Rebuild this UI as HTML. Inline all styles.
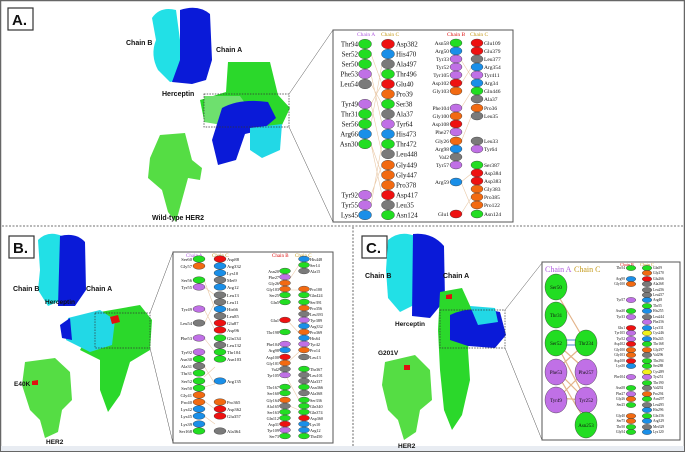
<!DOCTYPE html>
<html><head><meta charset="utf-8"><style>
html,body{margin:0;padding:0;background:#fff}
svg{display:block}
text{font-family:"Liberation Serif",serif;fill:#111}
.s{font-family:"Liberation Sans",sans-serif;font-weight:bold}
ellipse{stroke:#333;stroke-width:.4}
.g{fill:#22dd22}.r{fill:#ee1111}.b{fill:#1a8fe8}.k{fill:#7a7a7a}.p{fill:#c070e6}.o{fill:#f26a12}.y{fill:#f2f21a}
.ln{stroke:#e9c9a8;stroke-width:.6;fill:none}
</style></head><body>
<svg width="685" height="452" viewBox="0 0 685 452" xmlns="http://www.w3.org/2000/svg">
<rect x="0.5" y="0.5" width="684" height="451" fill="#fff" stroke="#666" stroke-width="1.5"/>
<line x1="2" y1="226" x2="683" y2="226" stroke="#444" stroke-dasharray="2,1.5" stroke-width=".8"/>
<line x1="353" y1="227" x2="353" y2="450" stroke="#444" stroke-dasharray="2,1.5" stroke-width=".8"/>
<rect x="1" y="446" width="683" height="5" fill="#e8ecf2"/>

<rect x="8" y="8" width="25" height="22" fill="#fff" stroke="#333" stroke-width="1.2"/>
<text x="12" y="25" class="s" font-size="15">A.</text>
<rect x="9" y="236" width="25" height="22" fill="#fff" stroke="#333" stroke-width="1.2"/>
<text x="13" y="253" class="s" font-size="15">B.</text>
<rect x="362" y="236" width="25" height="22" fill="#fff" stroke="#333" stroke-width="1.2"/>
<text x="366" y="253" class="s" font-size="15">C.</text>

<!-- Panel A proteins -->
<path d="M152 18 Q160 6 176 10 L180 40 L182 80 L170 82 L158 70 Q150 55 156 40 Z" fill="#22e0e6"/>
<path d="M180 10 Q198 4 210 14 L212 60 L206 80 L192 84 L172 82 L180 60 Z" fill="#0a1ad8"/>
<text x="126" y="45" class="s" font-size="7">Chain B</text>
<text x="216" y="52" class="s" font-size="7">Chain A</text>
<text x="162" y="96" class="s" font-size="7">Herceptin</text>
<path d="M228 62 L270 62 L278 95 L290 108 L282 125 L240 128 L204 120 L200 100 L226 92 Z" fill="#2bd82b"/>
<path d="M204 96 L240 96 L250 110 L240 128 L204 122 Z" fill="#6ee06e"/>
<path d="M222 108 Q240 98 268 102 L276 118 L262 130 L245 134 L236 160 L218 165 L212 140 Z" fill="#0a1ad8"/>
<path d="M250 128 L282 124 L280 150 L262 158 L250 150 Z" fill="#22d8e6"/>
<rect x="204" y="94" width="85" height="33" fill="none" stroke="#333" stroke-dasharray="1.5,1.2" stroke-width=".7"/>
<line x1="289" y1="94" x2="333" y2="30" stroke="#555" stroke-width=".5"/>
<line x1="289" y1="127" x2="333" y2="222" stroke="#555" stroke-width=".5"/>
<path d="M160 135 L185 133 L192 160 L202 168 L200 180 L188 178 L182 200 L176 222 L168 212 L162 190 L148 178 L150 158 Z" fill="#55dd44"/>
<text x="152" y="220" class="s" font-size="7">Wild-type HER2</text>

<!-- Inset A -->
<rect x="333" y="30" width="180" height="192" fill="#fff" stroke="#555" stroke-width="1"/>
<g class="ln">
<path d="M371 84 L382 104 M371 104 L382 84 M371 74 L382 124 M371 144 L382 175 M371 144 L382 195 M371 104 L382 154 M371 124 L382 64 M371 195 L382 165 M371 205 L382 144 M371 54 L382 84"/>
<path d="M461 60 L471 76 M461 84 L471 68 M461 108 L471 92 M461 142 L471 117 M461 182 L471 206 M461 182 L471 174 M461 214 L471 198"/>
</g>
<g font-size="5.5"><text x="357" y="36" style="fill:#b05ce0">Chain A</text><text x="381" y="36" style="fill:#c49a1a">Chain C</text>
<text x="447" y="36" style="fill:#dd1111">Chain B</text><text x="470" y="36" style="fill:#c49a1a">Chain C</text></g>
<g font-size="7" text-anchor="end">
<text x="358" y="46.5">Thr94</text><text x="358" y="56.5">Ser52</text><text x="358" y="66.5">Ser50</text><text x="358" y="76.5">Phe53</text><text x="358" y="86.5">Leu54</text><text x="358" y="106.5">Tyr49</text><text x="358" y="116.5">Thr31</text><text x="358" y="126.5">Ser56</text><text x="358" y="136.5">Arg66</text><text x="358" y="146.5">Asn30</text><text x="358" y="197.5">Tyr92</text><text x="358" y="207.5">Tyr55</text><text x="358" y="217.5">Lys45</text>
</g>
<g>
<ellipse cx="365" cy="44" rx="6.5" ry="4.8" class="g"/><ellipse cx="365" cy="54" rx="6.5" ry="4.8" class="g"/><ellipse cx="365" cy="64" rx="6.5" ry="4.8" class="g"/><ellipse cx="365" cy="74" rx="6.5" ry="4.8" class="p"/><ellipse cx="365" cy="84" rx="6.5" ry="4.8" class="k"/><ellipse cx="365" cy="104" rx="6.5" ry="4.8" class="p"/><ellipse cx="365" cy="114" rx="6.5" ry="4.8" class="g"/><ellipse cx="365" cy="124" rx="6.5" ry="4.8" class="g"/><ellipse cx="365" cy="134" rx="6.5" ry="4.8" class="b"/><ellipse cx="365" cy="144" rx="6.5" ry="4.8" class="g"/><ellipse cx="365" cy="195" rx="6.5" ry="4.8" class="p"/><ellipse cx="365" cy="205" rx="6.5" ry="4.8" class="p"/><ellipse cx="365" cy="215" rx="6.5" ry="4.8" class="b"/>
<ellipse cx="388" cy="44" rx="6.5" ry="4.8" class="r"/><ellipse cx="388" cy="54" rx="6.5" ry="4.8" class="b"/><ellipse cx="388" cy="64" rx="6.5" ry="4.8" class="k"/><ellipse cx="388" cy="74" rx="6.5" ry="4.8" class="g"/><ellipse cx="388" cy="84" rx="6.5" ry="4.8" class="r"/><ellipse cx="388" cy="94" rx="6.5" ry="4.8" class="o"/><ellipse cx="388" cy="104" rx="6.5" ry="4.8" class="g"/><ellipse cx="388" cy="114" rx="6.5" ry="4.8" class="k"/><ellipse cx="388" cy="124" rx="6.5" ry="4.8" class="p"/><ellipse cx="388" cy="134" rx="6.5" ry="4.8" class="b"/><ellipse cx="388" cy="144" rx="6.5" ry="4.8" class="g"/><ellipse cx="388" cy="154" rx="6.5" ry="4.8" class="k"/><ellipse cx="388" cy="165" rx="6.5" ry="4.8" class="o"/><ellipse cx="388" cy="175" rx="6.5" ry="4.8" class="o"/><ellipse cx="388" cy="185" rx="6.5" ry="4.8" class="o"/><ellipse cx="388" cy="195" rx="6.5" ry="4.8" class="r"/><ellipse cx="388" cy="205" rx="6.5" ry="4.8" class="k"/><ellipse cx="388" cy="215" rx="6.5" ry="4.8" class="g"/>
</g>
<g font-size="7">
<text x="396" y="46.5">Asp382</text><text x="396" y="56.5">His470</text><text x="396" y="66.5">Ala497</text><text x="396" y="76.5">Thr496</text><text x="396" y="86.5">Glu40</text><text x="396" y="96.5">Pro39</text><text x="396" y="106.5">Ser38</text><text x="396" y="116.5">Ala37</text><text x="396" y="126.5">Tyr64</text><text x="396" y="136.5">His473</text><text x="396" y="146.5">Thr472</text><text x="396" y="156.5">Leu448</text><text x="396" y="167.5">Gly449</text><text x="396" y="177.5">Gly447</text><text x="396" y="187.5">Pro378</text><text x="396" y="197.5">Asp417</text><text x="396" y="207.5">Leu35</text><text x="396" y="217.5">Asn124</text>
</g>
<g font-size="5.5" text-anchor="end">
<text x="449" y="45">Asn58</text><text x="449" y="53">Arg50</text><text x="449" y="61">Tyr33</text><text x="449" y="69">Tyr52</text><text x="449" y="77">Tyr105</text><text x="449" y="85">Asp102</text><text x="449" y="93">Gly103</text><text x="449" y="110">Phe104</text><text x="449" y="118">Gly100</text><text x="449" y="126">Asp108</text><text x="449" y="134">Phe27</text><text x="449" y="143">Gly26</text><text x="449" y="151">Arg98</text><text x="449" y="159">Val2</text><text x="449" y="167">Tyr57</text><text x="449" y="184">Arg59</text><text x="449" y="216">Glu1</text>
</g>
<g>
<ellipse cx="456" cy="43" rx="6" ry="4" class="g"/><ellipse cx="456" cy="51" rx="6" ry="4" class="b"/><ellipse cx="456" cy="59" rx="6" ry="4" class="p"/><ellipse cx="456" cy="67" rx="6" ry="4" class="p"/><ellipse cx="456" cy="75" rx="6" ry="4" class="p"/><ellipse cx="456" cy="83" rx="6" ry="4" class="r"/><ellipse cx="456" cy="91" rx="6" ry="4" class="o"/><ellipse cx="456" cy="108" rx="6" ry="4" class="p"/><ellipse cx="456" cy="116" rx="6" ry="4" class="o"/><ellipse cx="456" cy="124" rx="6" ry="4" class="r"/><ellipse cx="456" cy="132" rx="6" ry="4" class="p"/><ellipse cx="456" cy="141" rx="6" ry="4" class="o"/><ellipse cx="456" cy="149" rx="6" ry="4" class="b"/><ellipse cx="456" cy="157" rx="6" ry="4" class="k"/><ellipse cx="456" cy="165" rx="6" ry="4" class="p"/><ellipse cx="456" cy="182" rx="6" ry="4" class="b"/><ellipse cx="456" cy="214" rx="6" ry="4" class="r"/>
<ellipse cx="477" cy="43" rx="6" ry="4" class="r"/><ellipse cx="477" cy="51" rx="6" ry="4" class="r"/><ellipse cx="477" cy="59" rx="6" ry="4" class="k"/><ellipse cx="477" cy="67" rx="6" ry="4" class="b"/><ellipse cx="477" cy="75" rx="6" ry="4" class="p"/><ellipse cx="477" cy="83" rx="6" ry="4" class="b"/><ellipse cx="477" cy="91" rx="6" ry="4" class="g"/><ellipse cx="477" cy="99" rx="6" ry="4" class="k"/><ellipse cx="477" cy="108" rx="6" ry="4" class="o"/><ellipse cx="477" cy="116" rx="6" ry="4" class="k"/><ellipse cx="477" cy="141" rx="6" ry="4" class="k"/><ellipse cx="477" cy="149" rx="6" ry="4" class="p"/><ellipse cx="477" cy="165" rx="6" ry="4" class="g"/><ellipse cx="477" cy="173" rx="6" ry="4" class="r"/><ellipse cx="477" cy="181" rx="6" ry="4" class="r"/><ellipse cx="477" cy="189" rx="6" ry="4" class="o"/><ellipse cx="477" cy="197" rx="6" ry="4" class="o"/><ellipse cx="477" cy="205" rx="6" ry="4" class="o"/><ellipse cx="477" cy="214" rx="6" ry="4" class="g"/>
</g>
<g font-size="5.5">
<text x="484" y="45">Glu109</text><text x="484" y="53">Glu379</text><text x="484" y="61">Leu377</text><text x="484" y="69">Arg354</text><text x="484" y="77">Tyr411</text><text x="484" y="85">Arg34</text><text x="484" y="93">Gln446</text><text x="484" y="101">Ala37</text><text x="484" y="110">Pro36</text><text x="484" y="118">Leu35</text><text x="484" y="143">Leu33</text><text x="484" y="151">Tyr64</text><text x="484" y="167">Ser387</text><text x="484" y="175">Asp384</text><text x="484" y="183">Asp383</text><text x="484" y="191">Gly383</text><text x="484" y="199">Pro385</text><text x="484" y="207">Pro122</text><text x="484" y="216">Asn124</text>
</g>

<!-- Panel B proteins -->
<path d="M38 240 Q48 230 62 236 L62 300 L48 306 L38 290 L40 270 Z" fill="#22e0e6"/>
<path d="M60 236 Q76 232 85 242 L86 290 L75 306 L58 306 Z" fill="#0a1ad8"/>
<text x="13" y="291" class="s" font-size="7">Chain B</text>
<text x="86" y="291" class="s" font-size="7">Chain A</text>
<text x="45" y="304" class="s" font-size="6.5">Herceptin</text>
<path d="M100 312 L140 305 L152 320 L150 350 L130 362 L120 395 L108 412 L100 390 L100 360 L80 350 Z" fill="#2bd82b"/>
<path d="M68 318 L100 310 L115 320 L112 345 L90 352 L66 340 Z" fill="#22d8e6"/>
<path d="M60 325 L70 318 L72 340 L62 338 Z" fill="#0a1ad8"/>
<path d="M110 317 L118 315 L120 322 L112 324 Z" fill="#e01010"/>
<rect x="95" y="313" width="55" height="35" fill="none" stroke="#333" stroke-dasharray="1.5,1.2" stroke-width=".7"/>
<line x1="150" y1="313" x2="173" y2="252" stroke="#555" stroke-width=".5"/>
<line x1="150" y1="348" x2="173" y2="443" stroke="#555" stroke-width=".5"/>
<path d="M25 362 L55 358 L70 372 L72 400 L62 410 L58 432 L45 438 L40 420 L30 410 L22 385 Z" fill="#55dd44"/>
<path d="M32 381 L38 380 L38 385 L32 385 Z" fill="#e01010"/>
<text x="14" y="386" class="s" font-size="6.5">E40K</text>
<text x="46" y="444" class="s" font-size="6.5">HER2</text>

<!-- Inset B -->
<rect x="173" y="252" width="160" height="191" fill="#fff" stroke="#555" stroke-width="1"/>
<g class="ln"><path d="M204 280 L215 309 M204 287 L215 295 M204 309 L215 330 M204 324 L215 302 M204 338 L215 352 M204 377 L215 367 M204 387 L215 384 M204 401 L215 409 M204 416 L215 424 M204 366 L215 384 M287 283 L299 265 M287 290 L299 290 M287 320 L299 333 M287 363 L299 352 M287 378 L299 400 M287 405 L299 410"/></g>
<g font-size="5"><text x="186" y="257" style="fill:#b05ce0">Chain A</text><text x="212" y="257" style="fill:#c49a1a">Chain C</text><text x="272" y="257" style="fill:#dd1111">Chain B</text><text x="295" y="257" style="fill:#c49a1a">Chain C</text></g>
<g font-size="4.6" text-anchor="end">
<text x="192" y="261">Ser60</text><text x="192" y="268">Gly57</text><text x="192" y="282">Ser56</text><text x="192" y="289">Tyr55</text><text x="192" y="311">Tyr49</text><text x="192" y="325">Leu54</text><text x="192" y="340">Phe53</text><text x="192" y="354">Tyr92</text><text x="192" y="361">Asn30</text><text x="192" y="368">Ala31</text><text x="192" y="375">Thr31</text><text x="192" y="383">Ser52</text><text x="192" y="390">Ser50</text><text x="192" y="397">Gly41</text><text x="192" y="404">Pro40</text><text x="192" y="411">Lys42</text><text x="192" y="418">Lys45</text><text x="192" y="426">Lys39</text><text x="192" y="433">Ser168</text>
</g>
<g>
<ellipse cx="199" cy="259" rx="6" ry="3.3" class="g"/><ellipse cx="199" cy="266" rx="6" ry="3.3" class="o"/><ellipse cx="199" cy="280" rx="6" ry="3.3" class="g"/><ellipse cx="199" cy="287" rx="6" ry="3.3" class="p"/><ellipse cx="199" cy="309" rx="6" ry="3.3" class="p"/><ellipse cx="199" cy="323" rx="6" ry="3.3" class="k"/><ellipse cx="199" cy="338" rx="6" ry="3.3" class="p"/><ellipse cx="199" cy="352" rx="6" ry="3.3" class="p"/><ellipse cx="199" cy="359" rx="6" ry="3.3" class="g"/><ellipse cx="199" cy="366" rx="6" ry="3.3" class="k"/><ellipse cx="199" cy="373" rx="6" ry="3.3" class="g"/><ellipse cx="199" cy="381" rx="6" ry="3.3" class="g"/><ellipse cx="199" cy="388" rx="6" ry="3.3" class="g"/><ellipse cx="199" cy="395" rx="6" ry="3.3" class="o"/><ellipse cx="199" cy="402" rx="6" ry="3.3" class="o"/><ellipse cx="199" cy="409" rx="6" ry="3.3" class="b"/><ellipse cx="199" cy="416" rx="6" ry="3.3" class="b"/><ellipse cx="199" cy="424" rx="6" ry="3.3" class="b"/><ellipse cx="199" cy="431" rx="6" ry="3.3" class="g"/>
<ellipse cx="220" cy="259" rx="6" ry="3.3" class="r"/><ellipse cx="220" cy="266" rx="6" ry="3.3" class="b"/><ellipse cx="220" cy="273" rx="6" ry="3.3" class="b"/><ellipse cx="220" cy="280" rx="6" ry="3.3" class="k"/><ellipse cx="220" cy="287" rx="6" ry="3.3" class="b"/><ellipse cx="220" cy="295" rx="6" ry="3.3" class="k"/><ellipse cx="220" cy="302" rx="6" ry="3.3" class="k"/><ellipse cx="220" cy="309" rx="6" ry="3.3" class="b"/><ellipse cx="220" cy="316" rx="6" ry="3.3" class="k"/><ellipse cx="220" cy="323" rx="6" ry="3.3" class="r"/><ellipse cx="220" cy="330" rx="6" ry="3.3" class="r"/><ellipse cx="220" cy="338" rx="6" ry="3.3" class="g"/><ellipse cx="220" cy="345" rx="6" ry="3.3" class="k"/><ellipse cx="220" cy="352" rx="6" ry="3.3" class="g"/><ellipse cx="220" cy="359" rx="6" ry="3.3" class="g"/><ellipse cx="220" cy="381" rx="6" ry="3.3" class="b"/><ellipse cx="220" cy="402" rx="6" ry="3.3" class="o"/><ellipse cx="220" cy="409" rx="6" ry="3.3" class="r"/><ellipse cx="220" cy="416" rx="6" ry="3.3" class="r"/><ellipse cx="220" cy="431" rx="6" ry="3.3" class="k"/>
</g>
<g font-size="4.6">
<text x="227" y="261">Asp88</text><text x="227" y="268">Arg332</text><text x="227" y="275">Lys10</text><text x="227" y="282">Met9</text><text x="227" y="289">Arg12</text><text x="227" y="297">Leu13</text><text x="227" y="304">Leu11</text><text x="227" y="311">His66</text><text x="227" y="318">Leu85</text><text x="227" y="325">Glu87</text><text x="227" y="332">Asp96</text><text x="227" y="340">Gln134</text><text x="227" y="347">Leu132</text><text x="227" y="354">Thr104</text><text x="227" y="361">Asn103</text><text x="227" y="383">Arg135</text><text x="227" y="404">Pro365</text><text x="227" y="411">Asp362</text><text x="227" y="418">Glu357</text><text x="227" y="433">Ala364</text>
</g>
<g font-size="4.2" text-anchor="end">
<text x="279" y="273">Asn20</text><text x="279" y="279">Phe27</text><text x="279" y="285">Gly26</text><text x="279" y="291">Gly103</text><text x="279" y="297">Ser25</text><text x="279" y="304">Gln5</text><text x="279" y="322">Glu1</text><text x="279" y="334">Thr198</text><text x="279" y="346">Phe104</text><text x="279" y="352">Arg98</text><text x="279" y="359">Asp100</text><text x="279" y="365">Gly101</text><text x="279" y="371">Val2</text><text x="279" y="377">Tyr105</text><text x="279" y="389">Thr167</text><text x="279" y="395">Ser160</text><text x="279" y="402">Gly164</text><text x="279" y="408">Ala165</text><text x="279" y="414">Ser163</text><text x="279" y="420">Gln112</text><text x="279" y="426">Asp31</text><text x="279" y="432">Tyr109</text><text x="279" y="438">Ser73</text>
</g>
<g>
<ellipse cx="285" cy="271" rx="5.5" ry="2.9" class="g"/><ellipse cx="285" cy="277" rx="5.5" ry="2.9" class="p"/><ellipse cx="285" cy="283" rx="5.5" ry="2.9" class="o"/><ellipse cx="285" cy="289" rx="5.5" ry="2.9" class="o"/><ellipse cx="285" cy="295" rx="5.5" ry="2.9" class="g"/><ellipse cx="285" cy="302" rx="5.5" ry="2.9" class="g"/><ellipse cx="285" cy="320" rx="5.5" ry="2.9" class="r"/><ellipse cx="285" cy="332" rx="5.5" ry="2.9" class="g"/><ellipse cx="285" cy="344" rx="5.5" ry="2.9" class="p"/><ellipse cx="285" cy="350" rx="5.5" ry="2.9" class="b"/><ellipse cx="285" cy="357" rx="5.5" ry="2.9" class="r"/><ellipse cx="285" cy="363" rx="5.5" ry="2.9" class="o"/><ellipse cx="285" cy="369" rx="5.5" ry="2.9" class="k"/><ellipse cx="285" cy="375" rx="5.5" ry="2.9" class="p"/><ellipse cx="285" cy="387" rx="5.5" ry="2.9" class="g"/><ellipse cx="285" cy="393" rx="5.5" ry="2.9" class="g"/><ellipse cx="285" cy="400" rx="5.5" ry="2.9" class="o"/><ellipse cx="285" cy="406" rx="5.5" ry="2.9" class="k"/><ellipse cx="285" cy="412" rx="5.5" ry="2.9" class="g"/><ellipse cx="285" cy="418" rx="5.5" ry="2.9" class="g"/><ellipse cx="285" cy="424" rx="5.5" ry="2.9" class="r"/><ellipse cx="285" cy="430" rx="5.5" ry="2.9" class="p"/><ellipse cx="285" cy="436" rx="5.5" ry="2.9" class="g"/>
<ellipse cx="304" cy="259" rx="5.5" ry="2.9" class="b"/><ellipse cx="304" cy="265" rx="5.5" ry="2.9" class="g"/><ellipse cx="304" cy="271" rx="5.5" ry="2.9" class="k"/><ellipse cx="304" cy="289" rx="5.5" ry="2.9" class="o"/><ellipse cx="304" cy="295" rx="5.5" ry="2.9" class="g"/><ellipse cx="304" cy="302" rx="5.5" ry="2.9" class="g"/><ellipse cx="304" cy="308" rx="5.5" ry="2.9" class="o"/><ellipse cx="304" cy="314" rx="5.5" ry="2.9" class="k"/><ellipse cx="304" cy="320" rx="5.5" ry="2.9" class="p"/><ellipse cx="304" cy="326" rx="5.5" ry="2.9" class="b"/><ellipse cx="304" cy="332" rx="5.5" ry="2.9" class="o"/><ellipse cx="304" cy="338" rx="5.5" ry="2.9" class="b"/><ellipse cx="304" cy="344" rx="5.5" ry="2.9" class="p"/><ellipse cx="304" cy="350" rx="5.5" ry="2.9" class="o"/><ellipse cx="304" cy="357" rx="5.5" ry="2.9" class="k"/><ellipse cx="304" cy="369" rx="5.5" ry="2.9" class="g"/><ellipse cx="304" cy="375" rx="5.5" ry="2.9" class="k"/><ellipse cx="304" cy="381" rx="5.5" ry="2.9" class="k"/><ellipse cx="304" cy="387" rx="5.5" ry="2.9" class="g"/><ellipse cx="304" cy="393" rx="5.5" ry="2.9" class="k"/><ellipse cx="304" cy="400" rx="5.5" ry="2.9" class="g"/><ellipse cx="304" cy="406" rx="5.5" ry="2.9" class="g"/><ellipse cx="304" cy="412" rx="5.5" ry="2.9" class="g"/><ellipse cx="304" cy="418" rx="5.5" ry="2.9" class="r"/><ellipse cx="304" cy="424" rx="5.5" ry="2.9" class="b"/><ellipse cx="304" cy="430" rx="5.5" ry="2.9" class="b"/><ellipse cx="304" cy="436" rx="5.5" ry="2.9" class="g"/>
</g>
<g font-size="4.2">
<text x="310" y="261">His448</text><text x="310" y="267">Ser14</text><text x="310" y="273">Ala15</text><text x="310" y="291">Pro100</text><text x="310" y="297">Gln424</text><text x="310" y="304">Ser391</text><text x="310" y="310">Pro356</text><text x="310" y="316">Leu393</text><text x="310" y="322">Tyr389</text><text x="310" y="328">Arg332</text><text x="310" y="334">Pro369</text><text x="310" y="340">His64</text><text x="310" y="346">Tyr42</text><text x="310" y="352">Pro14</text><text x="310" y="359">Leu13</text><text x="310" y="371">Thr367</text><text x="310" y="377">Leu101</text><text x="310" y="383">Ala337</text><text x="310" y="389">Asn366</text><text x="310" y="395">Ala368</text><text x="310" y="402">Ser336</text><text x="310" y="408">Gln340</text><text x="310" y="414">Gln374</text><text x="310" y="420">Asp360</text><text x="310" y="426">Lys10</text><text x="310" y="432">Arg12</text><text x="310" y="438">Thr450</text>
</g>

<!-- Panel C proteins -->
<path d="M388 240 Q400 230 415 236 L414 305 L400 312 L388 298 L386 270 Z" fill="#22e0e6"/>
<path d="M413 234 Q432 232 444 246 L445 300 L430 318 L412 316 Z" fill="#0a1ad8"/>
<text x="365" y="278" class="s" font-size="7">Chain B</text>
<text x="443" y="278" class="s" font-size="7">Chain A</text>
<text x="395" y="326" class="s" font-size="6.5">Herceptin</text>
<path d="M440 292 L462 288 L472 310 L468 350 L470 380 L462 415 L452 430 L444 410 L440 370 L438 330 Z" fill="#2bd82b"/>
<path d="M446 295 L452 294 L452 299 L446 299 Z" fill="#e01010"/>
<path d="M450 315 Q470 305 500 312 L506 335 L495 348 L468 346 L450 340 Z" fill="#0a1ad8"/>
<path d="M470 306 L495 308 L498 322 L478 325 Z" fill="#22d8e6"/>
<rect x="440" y="310" width="65" height="38" fill="none" stroke="#333" stroke-dasharray="1.5,1.2" stroke-width=".7"/>
<line x1="505" y1="310" x2="542" y2="263" stroke="#555" stroke-width=".5"/>
<line x1="505" y1="348" x2="542" y2="440" stroke="#555" stroke-width=".5"/>
<path d="M385 362 L415 355 L430 370 L432 400 L420 410 L416 432 L404 440 L398 420 L388 410 L382 385 Z" fill="#55dd44"/>
<path d="M404 365 L410 365 L410 370 L404 370 Z" fill="#e01010"/>
<text x="378" y="355" class="s" font-size="6.5">G201V</text>
<text x="398" y="448" class="s" font-size="6.5">HER2</text>

<!-- Inset C -->
<rect x="542" y="262" width="138" height="178" fill="#fff" stroke="#555" stroke-width="1"/>
<g stroke="#e3b48a" stroke-width="1.2" fill="none"><path d="M556 292 L586 343 M556 343 L586 370 M556 370 L586 343 M556 370 L586 400 M556 400 L586 370 M556 372 L586 422 M556 398 L586 400 M556 343 L586 400"/><path d="M566 340 L576 340 M566 345 L576 345" stroke="#6a9ed8"/></g>
<text x="545" y="272" font-size="8" style="fill:#b05ce0">Chain A</text>
<text x="574" y="272" font-size="8" style="fill:#c49a1a">Chain C</text>
<g stroke-width=".6">
<ellipse cx="556" cy="287" rx="11" ry="13" class="g"/><ellipse cx="556" cy="315" rx="11" ry="13" class="g"/><ellipse cx="556" cy="343" rx="11" ry="13" class="g"/><ellipse cx="556" cy="372" rx="11" ry="13" class="p"/><ellipse cx="556" cy="400" rx="11" ry="13" class="p"/>
<ellipse cx="586" cy="343" rx="11" ry="13" class="g"/><ellipse cx="586" cy="372" rx="11" ry="13" class="p"/><ellipse cx="586" cy="400" rx="11" ry="13" class="p"/><ellipse cx="586" cy="425" rx="11" ry="13" class="g"/>
</g>
<g font-size="5" text-anchor="middle" style="fill:#333">
<text x="556" y="289">Ser50</text><text x="556" y="317">Thr31</text><text x="556" y="345">Ser52</text><text x="556" y="374">Phe53</text><text x="556" y="402">Tyr49</text>
<text x="586" y="345">Thr234</text><text x="586" y="374">Phe257</text><text x="586" y="402">Tyr252</text><text x="586" y="427">Asn253</text>
</g>
<g font-size="4.2"><text x="620" y="266" style="fill:#dd1111">Chain B</text><text x="640" y="266" style="fill:#c49a1a">Chain C</text></g>
<g font-size="3.6" text-anchor="end">
<text x="625" y="269">Thr54</text><text x="625" y="280">Arg98</text><text x="625" y="285">Gly100</text><text x="625" y="301">Tyr57</text><text x="625" y="312">Asn30</text><text x="625" y="318">Tyr33</text><text x="625" y="329">Glu1</text><text x="625" y="334">Tyr105</text><text x="625" y="340">Tyr52</text><text x="625" y="345">Asp102</text><text x="625" y="351">Gly100</text><text x="625" y="356">Gly103</text><text x="625" y="362">Asp108</text><text x="625" y="367">Lys50</text><text x="625" y="378">Phe104</text><text x="625" y="389">Asn58</text><text x="625" y="395">Phe27</text><text x="625" y="400">Gly26</text><text x="625" y="406">Ser25</text><text x="625" y="417">Gly40</text><text x="625" y="422">Ser75</text><text x="625" y="428">Thr50</text><text x="625" y="433">Gly54</text>
</g>
<g>
<ellipse cx="631" cy="268" rx="4.8" ry="2.6" class="g"/><ellipse cx="631" cy="279" rx="4.8" ry="2.6" class="b"/><ellipse cx="631" cy="284" rx="4.8" ry="2.6" class="o"/><ellipse cx="631" cy="300" rx="4.8" ry="2.6" class="p"/><ellipse cx="631" cy="311" rx="4.8" ry="2.6" class="g"/><ellipse cx="631" cy="317" rx="4.8" ry="2.6" class="p"/><ellipse cx="631" cy="328" rx="4.8" ry="2.6" class="r"/><ellipse cx="631" cy="333" rx="4.8" ry="2.6" class="p"/><ellipse cx="631" cy="339" rx="4.8" ry="2.6" class="p"/><ellipse cx="631" cy="344" rx="4.8" ry="2.6" class="r"/><ellipse cx="631" cy="350" rx="4.8" ry="2.6" class="o"/><ellipse cx="631" cy="355" rx="4.8" ry="2.6" class="o"/><ellipse cx="631" cy="361" rx="4.8" ry="2.6" class="r"/><ellipse cx="631" cy="366" rx="4.8" ry="2.6" class="b"/><ellipse cx="631" cy="377" rx="4.8" ry="2.6" class="p"/><ellipse cx="631" cy="388" rx="4.8" ry="2.6" class="g"/><ellipse cx="631" cy="394" rx="4.8" ry="2.6" class="p"/><ellipse cx="631" cy="399" rx="4.8" ry="2.6" class="o"/><ellipse cx="631" cy="405" rx="4.8" ry="2.6" class="g"/><ellipse cx="631" cy="416" rx="4.8" ry="2.6" class="o"/><ellipse cx="631" cy="421" rx="4.8" ry="2.6" class="o"/><ellipse cx="631" cy="427" rx="4.8" ry="2.6" class="g"/><ellipse cx="631" cy="432" rx="4.8" ry="2.6" class="g"/>
<ellipse cx="647" cy="268" rx="4.8" ry="2.6" class="g"/><ellipse cx="647" cy="273" rx="4.8" ry="2.6" class="o"/><ellipse cx="647" cy="279" rx="4.8" ry="2.6" class="r"/><ellipse cx="647" cy="284" rx="4.8" ry="2.6" class="k"/><ellipse cx="647" cy="290" rx="4.8" ry="2.6" class="k"/><ellipse cx="647" cy="295" rx="4.8" ry="2.6" class="k"/><ellipse cx="647" cy="300" rx="4.8" ry="2.6" class="b"/><ellipse cx="647" cy="306" rx="4.8" ry="2.6" class="g"/><ellipse cx="647" cy="311" rx="4.8" ry="2.6" class="b"/><ellipse cx="647" cy="317" rx="4.8" ry="2.6" class="k"/><ellipse cx="647" cy="322" rx="4.8" ry="2.6" class="p"/><ellipse cx="647" cy="328" rx="4.8" ry="2.6" class="b"/><ellipse cx="647" cy="333" rx="4.8" ry="2.6" class="y"/><ellipse cx="647" cy="339" rx="4.8" ry="2.6" class="b"/><ellipse cx="647" cy="344" rx="4.8" ry="2.6" class="g"/><ellipse cx="647" cy="350" rx="4.8" ry="2.6" class="o"/><ellipse cx="647" cy="355" rx="4.8" ry="2.6" class="k"/><ellipse cx="647" cy="361" rx="4.8" ry="2.6" class="g"/><ellipse cx="647" cy="366" rx="4.8" ry="2.6" class="g"/><ellipse cx="647" cy="372" rx="4.8" ry="2.6" class="y"/><ellipse cx="647" cy="377" rx="4.8" ry="2.6" class="p"/><ellipse cx="647" cy="383" rx="4.8" ry="2.6" class="g"/><ellipse cx="647" cy="388" rx="4.8" ry="2.6" class="k"/><ellipse cx="647" cy="394" rx="4.8" ry="2.6" class="o"/><ellipse cx="647" cy="399" rx="4.8" ry="2.6" class="g"/><ellipse cx="647" cy="405" rx="4.8" ry="2.6" class="k"/><ellipse cx="647" cy="410" rx="4.8" ry="2.6" class="b"/><ellipse cx="647" cy="416" rx="4.8" ry="2.6" class="g"/><ellipse cx="647" cy="421" rx="4.8" ry="2.6" class="b"/><ellipse cx="647" cy="427" rx="4.8" ry="2.6" class="k"/><ellipse cx="647" cy="432" rx="4.8" ry="2.6" class="b"/>
</g>
<g font-size="3.6">
<text x="653" y="269">Gln59</text><text x="653" y="274">Gly270</text><text x="653" y="280">Glu266</text><text x="653" y="285">Ala268</text><text x="653" y="291">Leu256</text><text x="653" y="296">Leu257</text><text x="653" y="301">Arg48</text><text x="653" y="307">Thr55</text><text x="653" y="312">His255</text><text x="653" y="318">Leu244</text><text x="653" y="323">Phe256</text><text x="653" y="329">Lys331</text><text x="653" y="334">Cys246</text><text x="653" y="340">His245</text><text x="653" y="345">Thr168</text><text x="653" y="351">Gly297</text><text x="653" y="356">Val296</text><text x="653" y="362">Thr294</text><text x="653" y="367">Ser288</text><text x="653" y="373">Cys289</text><text x="653" y="378">Tyr251</text><text x="653" y="384">Thr190</text><text x="653" y="389">Val292</text><text x="653" y="395">Pro294</text><text x="653" y="400">Asn297</text><text x="653" y="406">Leu295</text><text x="653" y="411">His296</text><text x="653" y="417">Gln156</text><text x="653" y="422">Arg329</text><text x="653" y="428">Met329</text><text x="653" y="433">Lys120</text>
</g>
</svg>
</body></html>
